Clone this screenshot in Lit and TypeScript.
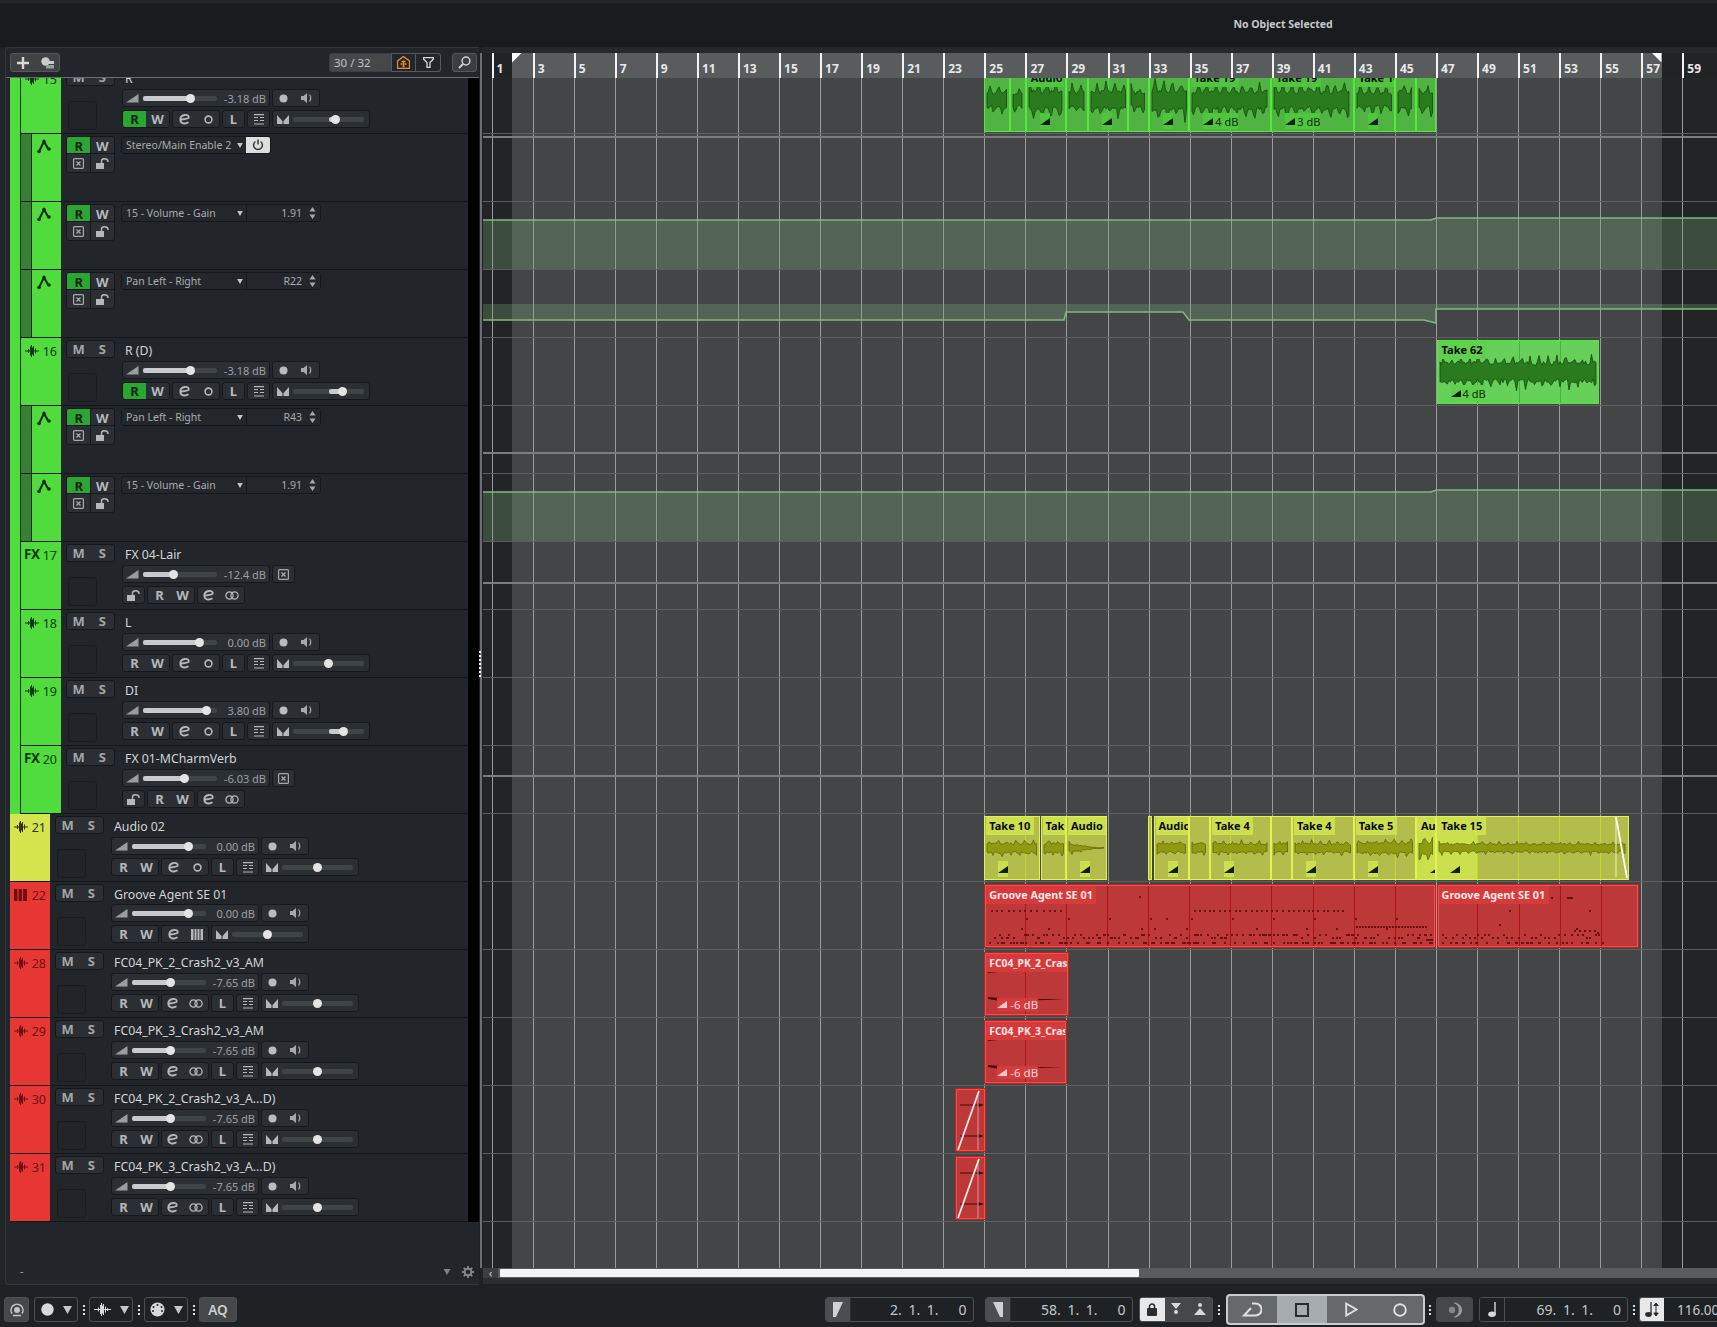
import { LitElement, html, svg, css, nothing } from "lit";
import { customElement } from "lit/decorators.js";

const PX = 20.53;
const barX = (b: number) => 491.6 + PX * (b - 1);
const AX = 483;
const GRID_BARS: number[] = [];
for (let b = 1; b <= 59; b += 2) GRID_BARS.push(b);

function rng(seed: number) {
  let s = seed * 9301 + 49297;
  return () => {
    s = (s * 9301 + 49297) % 233280;
    return s / 233280;
  };
}

function wavePath(seed: number, w: number, cy: number, amp: number, taper = false, calm = false) {
  const r = rng(seed);
  const top: string[] = [];
  const bot: string[] = [];
  const ph = r() * 6;
  const envAt = (x: number) => {
    const peak = Math.pow(Math.abs(Math.sin(x * 0.36 + ph)), calm ? 16 : 8) * (calm ? 0.4 : 0.6);
    return 0.3 + r() * 0.2 + peak * (0.4 + r() * 0.6);
  };
  for (let x = 0; x <= w; x += 1.5) {
    const k = taper ? Math.max(0.1, 1 - (x / w) * 1.2) : 1;
    top.push(`${x},${(cy - amp * envAt(x) * k).toFixed(1)}`);
    bot.push(`${x},${(cy + amp * envAt(x + 5) * k).toFixed(1)}`);
  }
  return "M" + top.join("L") + "L" + bot.reverse().join("L") + "Z";
}

const ic = {
  wave: html`<svg class="ic" width="14" height="12" viewBox="0 0 14 12"><path d="M0 6h14M3.500 4v4M5.500 1.500v9M6.500 0v12M7.500 2.500v7M8.500 1v10M10.500 3.500v5" stroke="currentColor" stroke-width="1" fill="none"/></svg>`,
  keys: html`<svg class="ic" width="13" height="12" viewBox="0 0 13 12"><path d="M0 0h13v12H0z" fill="currentColor"/><path d="M4 0v12M8.500 0v12" stroke="#e73735" stroke-width="1.200"/></svg>`,
  auto: html`<svg width="15" height="15" viewBox="0 0 15 15"><path d="M2 12.500L7 2.500l4.500 8" fill="none" stroke="#102a0c" stroke-width="2"/><circle cx="2" cy="12.500" r="1.800" fill="#102a0c"/><circle cx="7" cy="2.500" r="1.800" fill="#102a0c"/><circle cx="12" cy="10" r="1.800" fill="#102a0c"/></svg>`,
  ramp: html`<svg width="13" height="10" viewBox="0 0 13 10"><path d="M0 9.500L12.500 1v8.500z" fill="#9a9da0"/></svg>`,
  dot: html`<svg width="9" height="9" viewBox="0 0 9 9"><circle cx="4.500" cy="4.500" r="4" fill="#b9bcbe"/></svg>`,
  speaker: html`<svg width="12" height="10" viewBox="0 0 12 10"><path d="M0 3h2.500L6 0v10L2.500 7H0z" fill="#a6a9ab"/><path d="M8.500 1.500Q11 5 8.500 8.500" stroke="#a6a9ab" stroke-width="1.200" fill="none"/></svg>`,
  e: html`<svg width="12" height="11" viewBox="0 0 12 11"><path d="M2 5.500C4 5.500 7 5 9.500 4C10.500 1.500 8 .8 6 1C3 1.300 1.200 3.500 1.300 6C1.500 9.500 6 10.500 9.500 8.300" fill="none" stroke="#b5b8ba" stroke-width="1.800"/></svg>`,
  o: html`<svg width="9" height="9" viewBox="0 0 9 9"><circle cx="4.500" cy="4.500" r="3.400" fill="none" stroke="#b5b8ba" stroke-width="1.600"/></svg>`,
  link: html`<svg width="14" height="9" viewBox="0 0 14 9"><circle cx="4.500" cy="4.500" r="3.600" fill="none" stroke="#b5b8ba" stroke-width="1.300"/><circle cx="9.500" cy="4.500" r="3.600" fill="none" stroke="#b5b8ba" stroke-width="1.300"/></svg>`,
  lanes: html`<svg width="12" height="11" viewBox="0 0 12 11"><path d="M1 .600h10M1 3.500h4M7 3.500h4M1 6.500h4M7 6.500h4M1 10h10" stroke="#b5b8ba" stroke-width="1.200"/></svg>`,
  midi: html`<svg width="12" height="11" viewBox="0 0 12 11"><path d="M0 0h12v11H0z" fill="#b5b8ba"/><path d="M3 0v11M6 0v11M9 0v11" stroke="#2a2e32" stroke-width="1"/></svg>`,
  pan: html`<svg width="12" height="10" viewBox="0 0 12 10"><path d="M0 1l5.500 6v3H0zM12 1L6.500 7v3H12z" fill="#b5b8ba"/></svg>`,
  xbox: html`<svg width="11" height="11" viewBox="0 0 11 11"><rect x=".6" y=".6" width="9.800" height="9.800" rx="1" fill="none" stroke="#a6a9ab" stroke-width="1.200"/><path d="M3.500 3.500l4 4M7.500 3.500l-4 4" stroke="#a6a9ab" stroke-width="1.300"/></svg>`,
  lock: html`<svg width="13" height="11" viewBox="0 0 13 11"><rect x="0" y="5" width="8" height="6" fill="#b5b8ba"/><path d="M5.500 5V3Q5.500 .8 8.500 .8T12 3v1" fill="none" stroke="#b5b8ba" stroke-width="1.400"/></svg>`,
  power: html`<svg width="12" height="12" viewBox="0 0 12 12"><path d="M3.500 2.500a4.400 4.400 0 1 0 5 0M6 .5v5" fill="none" stroke="#33373a" stroke-width="1.500"/></svg>`,
  updown: html`<svg width="7" height="12" viewBox="0 0 7 12"><path d="M3.500 0l3 4.500H.5zM3.500 12l3-4.500H.5z" fill="#a6a9ab"/></svg>`,
  plus: html`<svg width="12" height="12" viewBox="0 0 12 12"><path d="M6 0v12M0 6h12" stroke="#d8d8d8" stroke-width="2.400"/></svg>`,
  stack: html`<svg width="13" height="12" viewBox="0 0 13 12"><circle cx="4.500" cy="4.500" r="4.200" fill="#c9cccd"/><rect x="4" y="4" width="9" height="3" fill="#c9cccd"/><rect x="5" y="8" width="8" height="3.500" fill="#9b9ea0"/></svg>`,
  home: html`<svg width="13" height="13" viewBox="0 0 13 13"><path d="M6.500 .5L12.500 5v7.500H.5V5z" fill="none" stroke="#e89030" stroke-width="1.300"/><path d="M4.500 5.500h1.500M7 5.500h1.500M3.500 8h2M7.500 8h2M5.500 10.500h2M6.500 4.500v6" stroke="#e89030" stroke-width="1.300"/></svg>`,
  funnel: html`<svg width="11" height="11" viewBox="0 0 11 11"><path d="M.5 .7h10v1.300L7 5.500V10.500H4V5.500L.5 2z" fill="none" stroke="#d8d8d8" stroke-width="1.300"/></svg>`,
  search: html`<svg width="13" height="13" viewBox="0 0 13 13"><circle cx="8" cy="5" r="3.900" fill="none" stroke="#d0d0d0" stroke-width="1.500"/><path d="M5 8l-4 4" stroke="#d0d0d0" stroke-width="2"/></svg>`,
  gear: html`<svg width="12" height="12" viewBox="0 0 12 12"><circle cx="6" cy="6" r="3.300" fill="none" stroke="#85888a" stroke-width="2"/><path d="M6 0v2.500M6 9.500V12M0 6h2.500M9.500 6H12M1.800 1.800l1.800 1.800M8.400 8.400l1.800 1.800M1.800 10.200l1.800-1.800M8.400 3.600l1.800-1.800" stroke="#85888a" stroke-width="1.800"/></svg>`,
  clockish: html`<svg width="14" height="14" viewBox="0 0 14 14"><circle cx="7" cy="7" r="3" fill="#c2c5c7"/><path d="M2 10.500A6 6 0 1 1 12 10.500M3 12.500h8" fill="none" stroke="#c2c5c7" stroke-width="1.500"/></svg>`,
  disc: html`<svg width="13" height="13" viewBox="0 0 13 13"><circle cx="6.500" cy="6.500" r="6.200" fill="#d8d8d8"/></svg>`,
  tri: html`<svg width="9" height="8" viewBox="0 0 9 8"><path d="M0 0h9L4.500 8z" fill="#c4c7c9"/></svg>`,
  bigwave: html`<svg width="17" height="13" viewBox="0 0 17 13"><path d="M0 6.500h17M4.500 4.500v4M6.500 2v9M7.500 0v13M8.500 2.500v8M9.500 1v11M11.500 3.500v6M13.500 5v3" stroke="#d8d8d8" stroke-width="1" fill="none"/></svg>`,
  midiport: html`<svg width="15" height="15" viewBox="0 0 15 15"><circle cx="7.500" cy="7.500" r="7" fill="#d8d8d8"/><g fill="#1e2225"><circle cx="7.500" cy="3" r="1"/><circle cx="3.500" cy="5" r="1"/><circle cx="11.500" cy="5" r="1"/><circle cx="3" cy="9" r="1"/><circle cx="12" cy="9" r="1"/></g></svg>`,
  locL: html`<svg width="10" height="15" viewBox="0 0 10 15"><path d="M0 0h10L3 15H0z" fill="#cfd1d2"/></svg>`,
  locR: html`<svg width="10" height="15" viewBox="0 0 10 15"><path d="M0 0h10v15H7z" fill="#cfd1d2"/></svg>`,
  padlock: html`<svg width="10" height="13" viewBox="0 0 10 13"><rect y="5" width="10" height="8" rx="1" fill="#2a2d30"/><path d="M2.500 6V3.500a2.500 2.500 0 0 1 5 0V6" fill="none" stroke="#2a2d30" stroke-width="1.500"/></svg>`,
  punchIn: html`<svg width="10" height="13" viewBox="0 0 10 13"><path d="M0 0h10L5 6zM5 7a2 2 0 1 1 0 4 2 2 0 0 1 0-4z" fill="#d8d8d8"/></svg>`,
  punchOut: html`<svg width="12" height="13" viewBox="0 0 12 13"><path d="M6 0a2 2 0 1 1 0 4 2 2 0 0 1 0-4zM6 5l6 7H0z" fill="#d8d8d8"/></svg>`,
  cycle: html`<svg width="20" height="15" viewBox="0 0 20 15"><path d="M10 1.500h3.500a6 6 0 0 1 0 12H2L9 6" fill="none" stroke="#e0e0e0" stroke-width="2"/></svg>`,
  stop: html`<svg width="14" height="14" viewBox="0 0 14 14"><rect x="1" y="1" width="12" height="12" fill="#a5abaf" stroke="#2a2d30" stroke-width="2"/></svg>`,
  play: html`<svg width="13" height="15" viewBox="0 0 13 15"><path d="M1.200 1.500L11.500 7.500 1.200 13.500z" fill="none" stroke="#e0e0e0" stroke-width="1.900"/></svg>`,
  rec: html`<svg width="14" height="14" viewBox="0 0 14 14"><circle cx="7" cy="7" r="5.800" fill="none" stroke="#e0e0e0" stroke-width="1.900"/></svg>`,
  moon: html`<svg width="18" height="16" viewBox="0 0 18 16"><circle cx="7" cy="8" r="3.200" fill="#83878a"/><path d="M9.500 1a7 7 0 0 1 0 14 7.500 7.500 0 0 0 0-14z" fill="#9a9da0" stroke="#9a9da0"/></svg>`,
  note: html`<svg width="9" height="15" viewBox="0 0 9 15"><ellipse cx="4" cy="12.300" rx="3.800" ry="2.700" fill="#d8d8d8"/><path d="M7 12V0" stroke="#d8d8d8" stroke-width="1.400"/></svg>`,
  tempo: html`<svg width="14" height="15" viewBox="0 0 14 15"><ellipse cx="3.500" cy="12.500" rx="3.300" ry="2.400" fill="#2a2d30"/><path d="M6 12V0" stroke="#2a2d30" stroke-width="1.300"/><path d="M11 1v13M8.800 3.500L11 1l2.200 2.500zM8.800 11L11 14l2.200-3z" stroke="#2a2d30" fill="#2a2d30"/></svg>`,
};

type TrackT = {
  k: "a" | "fx" | "inst" | "auto";
  color?: "g" | "y" | "r";
  n?: string;
  name?: string;
  db?: string;
  f?: number;
  p?: number;
  rOn?: boolean;
  val?: string;
};

const A = (name: string, val: string): TrackT => ({ k: "auto", color: "g", name, val });
const TRACKS: TrackT[] = [
  { k: "a", color: "g", n: "15", name: "R", db: "-3.18 dB", f: 47, p: 42, rOn: true },
  A("Stereo/Main Enable 2", ""),
  A("15 - Volume - Gain", "1.91"),
  A("Pan Left - Right", "R22"),
  { k: "a", color: "g", n: "16", name: "R (D)", db: "-3.18 dB", f: 47, p: 49, rOn: true },
  A("Pan Left - Right", "R43"),
  A("15 - Volume - Gain", "1.91"),
  { k: "fx", color: "g", n: "17", name: "FX 04-Lair", db: "-12.4 dB", f: 30 },
  { k: "a", color: "g", n: "18", name: "L", db: "0.00 dB", f: 56, p: 35.5 },
  { k: "a", color: "g", n: "19", name: "DI", db: "3.80 dB", f: 63, p: 50 },
  { k: "fx", color: "g", n: "20", name: "FX 01-MCharmVerb", db: "-6.03 dB", f: 41.5 },
  { k: "a", color: "y", n: "21", name: "Audio 02", db: "0.00 dB", f: 56, p: 35.5 },
  { k: "inst", color: "r", n: "22", name: "Groove Agent SE 01", db: "0.00 dB", f: 56, p: 35.5 },
  { k: "a", color: "r", n: "28", name: "FC04_PK_2_Crash2_v3_AM", db: "-7.65 dB", f: 38, p: 35.5 },
  { k: "a", color: "r", n: "29", name: "FC04_PK_3_Crash2_v3_AM", db: "-7.65 dB", f: 38, p: 35.5 },
  { k: "a", color: "r", n: "30", name: "FC04_PK_2_Crash2_v3_A...D)", db: "-7.65 dB", f: 38, p: 35.5 },
  { k: "a", color: "r", n: "31", name: "FC04_PK_3_Crash2_v3_A...D)", db: "-7.65 dB", f: 38, p: 35.5 },
];

type ClipT = {
  a: number;
  b: number;
  c: "g" | "gs" | "y" | "r";
  label?: string;
  labelW?: number;
  wave?: number;
  taper?: boolean;
  calm?: boolean;
  fade?: string | boolean;
  bright?: number;
  kind?: "notes" | "crash" | "tiny";
  notes?: number;
  seed?: number;
  fadeOut?: boolean;
};

const GC: Record<string, string> = { g: "#5bd14c", gs: "#43b538", y: "#c4d72f", r: "#ad1616" };

const GREEN_CLIPS: ClipT[] = [
  [984.3, 1010, "", 17, false],
  [1010, 1025.7, "", 15, false],
  [1025.7, 1066, "Audio", 21, true],
  [1066, 1087.7, "", 18, false],
  [1087.7, 1128.3, "", 19, true],
  [1128.3, 1148.7, "", 17, false],
  [1148.7, 1189.3, "", 22, true],
  [1189.3, 1271.3, "Take 19", 20, "4 dB"],
  [1271.3, 1353.7, "Take 19", 20, "3 dB"],
  [1353.7, 1395.3, "Take 16", 16, true],
  [1395.3, 1415.7, "", 20, false],
  [1415.7, 1436.3, "", 17, false],
].map((r: any, i) => ({ a: r[0], b: r[1], c: "g" as const, label: r[2], wave: r[3], fade: r[4], seed: 10 + i, labelW: r[2] === "Audio" ? 36 : 48 }));

const YELLOW_CLIPS: ClipT[] = [
  { a: 984.3, b: 1040.5, c: "y", label: "Take 10", wave: 11, fade: true, seed: 31, labelW: 48, calm: true },
  { a: 1040.5, b: 1066, c: "y", label: "Take", wave: 11, seed: 32, labelW: 25, calm: true },
  { a: 1066, b: 1107.3, c: "y", label: "Audio 0", wave: 9, taper: true, fade: true, seed: 33, labelW: 39, calm: true },
  { a: 1148.4, b: 1152, c: "y", seed: 34 },
  { a: 1153.5, b: 1189.3, c: "y", label: "Audio", wave: 10, fade: true, seed: 35, labelW: 34, calm: true },
  { a: 1189.3, b: 1210.2, c: "y", wave: 10, seed: 36, calm: true },
  { a: 1210.2, b: 1271.3, c: "y", label: "Take 4", wave: 10, fade: true, seed: 37, labelW: 41, calm: true },
  { a: 1271.3, b: 1292, c: "y", wave: 10, seed: 38, calm: true },
  { a: 1292, b: 1353.7, c: "y", label: "Take 4", wave: 10, fade: true, seed: 39, labelW: 41, calm: true },
  { a: 1353.7, b: 1416, c: "y", label: "Take 5", wave: 12, fade: true, seed: 40, labelW: 41, calm: true },
  { a: 1416, b: 1436.3, c: "y", label: "Au", wave: 14, fade: true, seed: 41, labelW: 19, bright: 21 },
  { a: 1436.3, b: 1629.3, c: "y", label: "Take 15", wave: 9, fade: true, seed: 42, labelW: 48, bright: 41, fadeOut: true, calm: true },
];

const LANES: { clips?: ClipT[]; line?: number; auto?: string }[] = [
  { clips: GREEN_CLIPS },
  { line: 2 },
  { auto: "vol1" },
  { auto: "pan1" },
  { clips: [{ a: 1436.6, b: 1599.3, c: "gs", label: "Take 62", labelW: 48, wave: 22, calm: true, fade: "4 dB", seed: 77 }] },
  { line: 46 },
  { auto: "vol2" },
  { line: 40 },
  {},
  {},
  { line: 29 },
  { clips: YELLOW_CLIPS },
  {
    clips: [
      { a: 984.3, b: 1436.3, c: "r", label: "Groove Agent SE 01", labelW: 110, kind: "notes", notes: 1 },
      { a: 1436.6, b: 1639.3, c: "r", label: "Groove Agent SE 01", labelW: 110, kind: "notes", notes: 2 },
    ],
  },
  { clips: [{ a: 984.3, b: 1069.5, c: "r", label: "FC04_PK_2_Crash2", labelW: 85, kind: "crash", fade: "-6 dB" }] },
  { clips: [{ a: 984.3, b: 1066.7, c: "r", label: "FC04_PK_3_Crash2", labelW: 79, kind: "crash", fade: "-6 dB" }] },
  { clips: [{ a: 955.3, b: 985.7, c: "r", kind: "tiny" }] },
  { clips: [{ a: 955.3, b: 985.7, c: "r", kind: "tiny" }] },
];

function notePattern(which: number, w: number) {
  const r = rng(which * 7 + 3);
  const items: [number, number, number][] = [];
  if (which === 1) {
    for (let x = 3; x < w - 2; x += 2 + r() * 5) if (r() > 0.1) items.push([Math.round(x), 48 + (r() > 0.5 ? 0 : 3), r() > 0.7 ? 3 : 2]);
    for (let x = 3; x < w - 2; x += 2 + r() * 9) items.push([Math.round(x), 56, r() > 0.6 ? 4 : 2]);
    for (let x = 5; x < 75; x += 4 + r() * 3) items.push([Math.round(x), 24, 2]);
    for (let x = 208; x < 360; x += 4 + r() * 2) items.push([Math.round(x), 24, 2]);
    for (let x = 370; x < 440; x += 3) items.push([x, 40, 2]);
    [40, 82, 123, 164, 180, 205, 246, 287, 328, 369, 410].forEach((x) => items.push([x, 32, 2]));
    [35, 62, 155, 168, 200, 270, 320, 350, 400].forEach((x) => items.push([x, 42, 2]));
    items.push([153, 10, 2], [440, 53, 7]);
  } else {
    for (let x = 3; x < 160; x += 2.5 + r() * 5) items.push([Math.round(x), 48 + (r() > 0.5 ? 0 : 3), 2]);
    for (let x = 3; x < 165; x += 4 + r() * 8) items.push([Math.round(x), 56, r() > 0.6 ? 3 : 2]);
    items.push([130, 11, 2], [128, 11, 6], [112, 11, 2], [70, 24, 2], [150, 24, 2], [60, 38, 2], [137, 42, 2], [158, 46, 2]);
    for (let x = 135; x < 160; x += 5) items.push([x, 44, 2]);
  }
  return items;
}

@customElement("app-root")
export class AppRoot extends LitElement {
  static styles = css`
    :host { display: block; width: 1717px; height: 1327px; overflow: hidden; background: #1e2225; font-family: "Noto Sans", "Open Sans", sans-serif; color: #c5c8ca; }
    svg { display: block; }
    .root { display: grid; grid-template-rows: 47px 1238px 42px; height: 1327px; }
    .top { background: #191b1e; border-top: 3px solid #24272a; box-sizing: border-box; display: flex; align-items: center; justify-content: center; padding-left: 849px; padding-bottom: 2px; font-weight: 700; font-size: 10.5px; color: #c6c8ca; }
    .main { display: flex; background: #212528; }
    .panel { box-sizing: border-box; width: 474px; margin-left: 5px; border: 1px solid #33373a; border-right: 0; border-radius: 4px 0 0 4px; background: #22262a; display: flex; flex-direction: column; flex-shrink: 0; }
    .tb { height: 30px; box-sizing: border-box; border-bottom: 1px solid #6b6e70; display: flex; align-items: flex-start; padding: 5px 0 0 4px; flex-shrink: 0; }
    .tb-g { height: 19px; box-sizing: border-box; border: 1px solid #55595c; border-radius: 3px; display: flex; align-items: center; background: #3f4346; }
    .tb-add { width: 50px; padding-left: 6px; gap: 12px; }
    .count { width: 62px; margin-left: 269px; background: #44484b; border: 1px solid #3a3e41; border-right: 0; border-radius: 3px 0 0 3px; font-size: 11.5px; padding-left: 4px; color: #c0c3c5; }
    .tb-i { width: 25px; justify-content: center; background: #22262a; border-radius: 0; }
    .tb-i.end { border-radius: 0 3px 3px 0; border-left: 0; }
    .tb-s { width: 25px; margin-left: 11px; justify-content: center; background: #3a3e41; }
    .list { flex: 1; overflow: hidden; min-height: 0; }
    .list-in { margin-top: -12px; padding-left: 4px; }
    .row { height: 68px; box-sizing: border-box; border-bottom: 1px solid #14171a; display: flex; align-items: flex-start; }
    .meter { margin-left: auto; width: 11px; height: 68px; background: #000; flex-shrink: 0; }
    .outer { width: 10px; height: 68px; background: #50dc3c; border-right: 1px solid #14301a; flex-shrink: 0; }
    .col { width: 40px; height: 67px; flex-shrink: 0; color: #0f3a0b; }
    .col.g { background: #50dc3c; }
    .col.y { background: #d5e54d; color: #2e3310; }
    .col.r { background: #e73735; color: #6e0f0f; }
    .head { display: flex; justify-content: space-between; align-items: center; padding: 4px 4px 0 4px; height: 18px; font-size: 12.5px; }
    .head .fx { font-weight: 700; font-size: 13.5px; letter-spacing: -0.5px; margin: -2px 0 0 -1px; }
    .autostrip { display: flex; flex-shrink: 0; height: 67px; }
    .dk { width: 10px; background: #3a7f36; border-right: 1px solid #14301a; }
    .br { width: 29px; background: #50dc3c; padding: 5px 0 0 5px; box-sizing: border-box; }
    .mcol { width: 49px; margin-left: 5px; flex-shrink: 0; padding-top: 2px; }
    .ms { height: 18px; box-sizing: border-box; display: flex; align-items: center; background: #2b2f33; border: 1px solid #15181b; border-radius: 3px; font-weight: 700; font-size: 13px; color: #a3a6a8; }
    .ms span { flex: 1; text-align: center; }
    .thumb { width: 29px; height: 29px; margin: 15px 0 0 2px; box-sizing: border-box; background: #212428; border: 1px solid #1a1d20; border-radius: 3px; }
    .ccol { margin-left: 7px; width: 300px; }
    .name { height: 19px; padding: 4px 0 0 3px; font-size: 12.3px; line-height: 18px; color: #d2d4d6; white-space: nowrap; }
    .inst .name { height: 18px; }
    .line { display: flex; gap: 2px; height: 18px; margin-bottom: 3px; }
    .grp { height: 18px; box-sizing: border-box; background: #2b2f33; border: 1px solid #15181b; border-radius: 3px; display: flex; align-items: center; justify-content: center; flex-shrink: 0; font-weight: 700; font-size: 13px; color: #b5b8ba; }
    .w48 { width: 48px; justify-content: space-around; }
    .w23 { width: 23px; }
    .rw { overflow: hidden; justify-content: flex-start; }
    .rw span { width: 50%; height: 100%; display: flex; align-items: center; justify-content: center; }
    .rw .on { background: #2aa732; color: #0d2410; }
    .fader { width: 148px; justify-content: flex-start; padding-left: 3px; font-weight: 400; font-size: 11px; color: #9b9fa2; }
    .track { position: relative; height: 5px; background: #3f4447; border-radius: 2px; flex-shrink: 0; }
    .track.f { width: 74px; margin-left: 4px; }
    .track.p { width: 71px; margin-left: 4px; }
    .fill { position: absolute; top: 0; height: 5px; background: #c8cbcd; border-radius: 2px; }
    .knob { position: absolute; top: -2px; width: 9px; height: 9px; border-radius: 50%; background: #e4e4e4; margin-left: -4.500px; }
    .db { margin-left: auto; padding-right: 3px; white-space: nowrap; }
    .pan { width: 98px; justify-content: flex-start; padding-left: 4px; }
    .auto-g { width: 49px; height: 37px; margin: 2px 0 0 5px; display: grid; grid-template-columns: 1fr 1fr; grid-template-rows: 17px 1fr; box-sizing: border-box; background: #2b2f33; border: 1px solid #15181b; border-radius: 3px; overflow: hidden; flex-shrink: 0; font-weight: 700; font-size: 13px; color: #b5b8ba; }
    .auto-g > div { display: flex; align-items: center; justify-content: center; border-left: 1px solid #15181b; border-top: 1px solid #15181b; margin: -1px 0 0 -1px; }
    .auto-g .on { background: #2aa732; color: #0d2410; }
    .dd { margin: 2px 0 0 6px; height: 18px; box-sizing: border-box; display: flex; font-size: 10.5px; color: #a8abad; background: #23272b; border: 1px solid #15181b; border-radius: 3px; overflow: hidden; flex-shrink: 0; }
    .dd-l { width: 124px; box-sizing: border-box; padding-left: 4px; display: flex; align-items: center; white-space: nowrap; }
    .dd-tri { margin-left: auto; margin-right: 3px; }
    .dd-tri svg { width: 6px; height: 5px; }
    .dd-v { width: 74px; box-sizing: border-box; display: flex; align-items: center; justify-content: flex-end; gap: 7px; padding-right: 4px; border-left: 1px solid #15181b; }
    .dd-p { width: 24px; background: #dedfe0; display: flex; align-items: center; justify-content: center; }
    .foot { height: 56px; flex-shrink: 0; display: flex; align-items: flex-end; padding: 0 5px 6px 14px; gap: 10px; font-size: 11px; color: #a6a9ab; }
    .foot .f-tri { margin-left: auto; margin-bottom: 3px; }
    .foot .f-tri svg { width: 10px; height: 6px; }
    .foot .f-tri svg path { fill: #7f8285; }
    .split { width: 4px; flex-shrink: 0; background: #1f2225; position: relative; }
    .split::before { content: ""; position: absolute; left: 1px; top: 6px; bottom: 17px; width: 2px; background: #6c6f71; }
    .grip { position: absolute; left: 0; top: 604px; width: 2px; height: 26px; background: repeating-linear-gradient(#fff 0 2px, transparent 2px 4px); }
    .arr { flex: 1; min-width: 0; padding-top: 6px; display: flex; flex-direction: column; background: #25282b; }
    .ruler { height: 25px; position: relative; background: #212325; flex-shrink: 0; overflow: hidden; }
    .ruler-in { position: absolute; top: 0; bottom: 0; background: #585c5d; }
    .tick { position: absolute; top: 0; bottom: 0; width: 1.500px; background: #f2f2f2; }
    .rn { position: absolute; top: 8px; font-size: 12px; font-weight: 700; line-height: 16px; color: #e8e8e8; }
    .ruler svg { position: absolute; top: 0; }
    .canvas { height: 1190px; position: relative; overflow: hidden; background: #232426; flex-shrink: 0; }
    .inner { position: absolute; top: 0; bottom: 0; background: #444547; }
    .gridsvg { position: absolute; left: 0; top: 0; }
    .lanes { position: absolute; left: 0; right: 0; top: -12px; }
    .lane { height: 68px; box-sizing: border-box; border-bottom: 1px solid #5d5e60; position: relative; }
    .lane .hl { position: absolute; left: 0; right: 0; height: 2px; background: #7a7e80; }
    .autosvg { position: absolute; left: 0; top: 0; }
    .clip { position: absolute; top: 2px; height: 64px; box-sizing: border-box; border: 1px solid; overflow: hidden; }
    .clip svg { position: absolute; left: 0; top: 0; }
    .clip.g { background: #50b443; border-color: #58e640; }
    .clip.gs { background: #66d05a; border-color: #4cec36; }
    .clip.y { background: #b3bd4c; border-color: #e2f250; }
    .clip.r { background: #bd3839; border-color: #f2504f; outline: 1px solid #c31f1f; outline-offset: -1px; border-width: 2px; }
    .bright { position: absolute; left: 0; top: 0; bottom: 0; background: #cbe04d; }
    .lbl { position: absolute; left: 1px; top: 0; height: 18px; padding-left: 3px; box-sizing: border-box; font-weight: 700; font-size: 11px; line-height: 18px; color: #0a0a0a; white-space: nowrap; overflow: hidden; }
    .g .lbl { background: #50c63e; }
    .gs .lbl { background: #5ed04c; }
    .y .lbl { background: #cce04f; }
    .r .lbl { background: #d73a3b; color: #ffe9e9; left: 0; font-size: 10.8px; }
    .r.crash .lbl { font-size: 10.3px; }
    .fd { position: absolute; left: 13px; top: 44px; height: 16px; display: flex; align-items: center; font-size: 11px; color: #0d2a09; gap: 2px; white-space: nowrap; }
    .g .fd { background: #50c63e; }
    .gs .fd { background: #5ed04c; }
    .y .fd { background: #cce04f; }
    .r .fd { background: #d73a3b; color: #f8dada; height: 13px; top: 44px; left: 11px; gap: 3px; font-size: 11.5px; }
    .fd svg { position: static; }
    .sb { height: 10px; background: #585c5d; position: relative; flex-shrink: 0; }
    .sb-btn { position: absolute; left: 0; top: 0; width: 15px; height: 10px; background: #3a3e41; font-size: 10px; line-height: 10px; text-align: center; color: #e0e0e0; }
    .sb-th { position: absolute; left: 17px; top: 1px; width: 639px; height: 8px; background: #f3f3f3; border-radius: 1px; }
    .sb-pad { flex: 1; background: #2a2e31; border-bottom: 1px solid #1c1f22; }
    .bar { display: flex; align-items: center; padding: 7px 0 0 4px; background: #1e2225; overflow: hidden; }
    .bar > * { flex-shrink: 0; }
    .bx { height: 25px; box-sizing: border-box; border: 1px solid #4b4f52; border-radius: 3px; display: flex; align-items: center; justify-content: center; gap: 4px; background: #1e2225; }
    .b-clock { width: 25px; background: #44484b; }
    .w44 { width: 44px; gap: 9px; }
    .dots { width: 11px; display: flex; flex-direction: column; align-items: center; gap: 2px; }
    .dots i { width: 2px; height: 2px; background: #e0e0e0; }
    .aq { width: 38px; background: #44484b; font-weight: 600; font-size: 13.5px; color: #cfd1d2; }
    .sp { width: 587.500px; }
    .loc { justify-content: flex-start; width: 149px; gap: 0; overflow: hidden; }
    .loc-i { width: 24px; height: 100%; background: #4a4e52; display: flex; align-items: center; justify-content: center; border-right: 1px solid #2a2e31; flex-shrink: 0; }
    .loc-i.n { background: #1e2225; border-right: 1px solid #4b4f52; }
    .loc-t { margin-left: auto; padding-right: 6px; font-size: 14px; color: #c4c7c9; white-space: pre; word-spacing: 3px; }
    .lockg { width: 74px; justify-content: space-between; padding: 0; overflow: hidden; margin-left: 6px; background: #44484b; gap: 0; }
    .lockg span { flex: 1; height: 100%; display: flex; align-items: center; justify-content: center; }
    .lockg .wh { background: #e8e8e8; flex: none; width: 25px; }
    .transport { width: 199px; height: 31px; box-sizing: border-box; border: 2px solid #c8cccf; border-radius: 4px; background: #66696b; display: grid; grid-template-columns: 49px 50px 50px 1fr; margin-top: 0; }
    .transport > div { display: flex; align-items: center; justify-content: center; }
    .transport .st { background: #a5abaf; }
    .metro { width: 37px; background: #44484b; border-color: #44484b; }
    .tempo { width: 90px; justify-content: flex-start; gap: 0; border-right: 0; border-radius: 3px 0 0 3px; overflow: hidden; }
    .tempo .wh { width: 24px; height: 100%; background: #e8e8e8; display: flex; align-items: center; justify-content: center; flex-shrink: 0; }
    .tempo .t { padding-left: 13px; font-size: 13.5px; color: #c4c7c9; }
    .ml6 { margin-left: 6.500px; }
    .ml11 { margin-left: 11px; }
  `;

  slider(f: number) {
    return html`<div class="track f"><div class="fill" style="left:0;width:${f}px"></div><div class="knob" style="left:${f}px"></div></div>`;
  }
  panSlider(p: number) {
    const c = 35.5;
    const l = Math.min(c, p);
    return html`<div class="track p"><div class="fill" style="left:${l}px;width:${Math.abs(p - c)}px"></div><div class="knob" style="left:${p}px"></div></div>`;
  }

  renderTrack(t: TrackT) {
    if (t.k === "auto") {
      const power = t.val === "";
      return html`<div class="row">
        <div class="outer"></div>
        <div class="autostrip"><div class="dk"></div><div class="br">${ic.auto}</div></div>
        <div class="auto-g"><div class="on">R</div><div>W</div><div>${ic.xbox}</div><div>${ic.lock}</div></div>
        <div class="dd">
          <div class="dd-l">${t.name}<span class="dd-tri">${ic.tri}</span></div>
          ${power ? html`<div class="dd-p">${ic.power}</div>` : html`<div class="dd-v">${t.val}${ic.updown}</div>`}
        </div>
        <div class="meter"></div>
      </div>`;
    }
    const green = t.color === "g";
    const fx = t.k === "fx";
    const inst = t.k === "inst";
    return html`<div class="row ${t.k}">
      ${green ? html`<div class="outer"></div>` : nothing}
      <div class="col ${t.color}">
        <div class="head">${fx ? html`<span class="fx">FX</span>` : inst ? ic.keys : ic.wave}<span>${t.n}</span></div>
      </div>
      <div class="mcol"><div class="ms"><span>M</span><span>S</span></div><div class="thumb"></div></div>
      <div class="ccol">
        <div class="name">${t.name}</div>
        <div class="line">
          <div class="grp fader">${ic.ramp}${this.slider(t.f!)}<span class="db">${t.db}</span></div>
          ${fx ? html`<div class="grp w23">${ic.xbox}</div>` : html`<div class="grp w48">${ic.dot}${ic.speaker}</div>`}
        </div>
        <div class="line">
          ${fx ? html`<div class="grp w23">${ic.lock}</div>` : nothing}
          <div class="grp w48 rw"><span class="${t.rOn ? "on" : ""}">R</span><span>W</span></div>
          <div class="grp w48">${ic.e}${fx ? ic.link : inst ? ic.midi : t.n && +t.n >= 28 ? ic.link : ic.o}</div>
          ${fx || inst ? nothing : html`<div class="grp w23">L</div><div class="grp w23">${ic.lanes}</div>`}
          ${fx ? nothing : html`<div class="grp pan">${ic.pan}${this.panSlider(t.p!)}</div>`}
        </div>
      </div>
      <div class="meter"></div>
    </div>`;
  }

  renderClip(c: ClipT) {
    const w = c.b - c.a;
    const left = c.a - AX;
    const inner = w - (c.c === "r" ? 4 : 2);
    const off = c.c === "r" ? 2 : 1;
    const bars = GRID_BARS.map((b) => Math.round(barX(b) - c.a - off) + 0.5).filter((x) => x > 1 && x < inner - 1);
    const fadeTri = (col: string) => html`<svg width="10" height="7" viewBox="0 0 10 7"><path d="M0 7L10 0v7z" fill="${col}"/></svg>`;
    const waveCols: Record<string, [string, string]> = { g: ["#2a7b1d", "#17470f"], gs: ["#2a7b1d", "#17470f"], y: ["#8f9a10", "#5f6612"] };
    return html`<div class="clip ${c.c} ${c.kind || ""}" style="left:${left}px;width:${w}px">
      ${c.bright ? html`<div class="bright" style="width:${c.bright}px"></div>` : nothing}
      <svg width="${inner}" height="62" viewBox="0 0 ${inner} 62">
        ${bars.map((x) => svg`<line x1="${x}" x2="${x}" y1="0" y2="62" stroke="${GC[c.c]}"/>`)}
        ${c.wave ? svg`<path d="${wavePath(c.seed || 1, inner - 4, 31, c.wave, c.taper, c.calm)}" transform="translate(2 0)" fill="${waveCols[c.c][0]}" stroke="${waveCols[c.c][1]}" stroke-width="0.8" stroke-linejoin="round"/>` : nothing}
        ${c.kind === "notes" ? notePattern(c.notes!, inner).map(([x, y, l]) => svg`<rect x="${x}" y="${y}" width="${l}" height="2" fill="#6e1010"/>`) : nothing}
        ${c.kind === "crash"
          ? svg`<path d="M2 45L14 47 L${inner - 2} 45.500 L14 44 2 43z" fill="#4a0c0c"/><path d="M2 17l10 1-10 1z" fill="#4a0c0c"/>`
          : nothing}
        ${c.kind === "tiny"
          ? svg`<path d="M3 15H${inner - 2}M3 46H${inner - 2}" stroke="#3d0b0b" stroke-width="1"/><path d="M21 13l6 2-6 2zM21 44l6 2-6 2z" fill="#3d0b0b"/>
                <line x1="21" x2="21" y1="2" y2="60" stroke="#e09a9a"/><line x1="1" y1="60" x2="22" y2="1" stroke="#f6e8e8" stroke-width="1.800"/>`
          : nothing}
        ${c.fadeOut ? svg`<line x1="${inner - 12}" x2="${inner - 12}" y1="0" y2="60" stroke="#eef2c8"/><line x1="${inner - 12}" y1="0" x2="${inner - 1}" y2="61" stroke="#fff" stroke-width="1.800"/>` : nothing}
      </svg>
      ${c.label ? html`<div class="lbl" style="width:${Math.min(c.labelW || 48, inner)}px">${c.label}</div>` : nothing}
      ${c.fade
        ? html`<div class="fd">${fadeTri(c.c === "r" ? "#f0c8c8" : "#10200c")}${typeof c.fade === "string" ? html`<span>${c.fade}</span>` : nothing}</div>`
        : nothing}
    </div>`;
  }

  renderAuto(id: string) {
    const w = 1234;
    const m = (x: number) => x - AX;
    const stroke = "#82b883";
    const fill = "rgba(115,165,115,0.32)";
    if (id === "vol1" || id === "vol2") {
      const y = 18;
      return html`<svg class="autosvg" width="${w}" height="67" viewBox="0 0 ${w} 67">
        <path d="M0 ${y}H${m(1431)}L${m(1436.5)} ${y - 2}H${w}V67H0Z" fill="${fill}"/>
        <path d="M0 ${y}H${m(1431)}L${m(1436.5)} ${y - 2}H${w}" fill="none" stroke="${stroke}" stroke-width="1.500"/>
      </svg>`;
    }
    const pts = `0 50H${m(1064)}L${m(1066)} 42H${m(1183)}L${m(1189)} 50H${m(1424)}L${m(1436)} 53V39H${w}`;
    return html`<svg class="autosvg" width="${w}" height="67" viewBox="0 0 ${w} 67">
      <path d="M0 34V50H${m(1064)}L${m(1066)} 42H${m(1183)}L${m(1189)} 50H${m(1424)}L${m(1436)} 53V39H${w}V34Z" fill="${fill}"/>
      <path d="M${pts}" fill="none" stroke="${stroke}" stroke-width="1.500"/>
    </svg>`;
  }

  render() {
    const innerL = barX(2) - AX;
    const innerW = barX(58) - barX(2);
    const gx = (b: number) => Math.round(barX(b) - AX) + 0.5;
    return html`<div class="root">
      <div class="top">No Object Selected</div>
      <div class="main">
        <div class="panel">
          <div class="tb">
            <div class="tb-g tb-add">${ic.plus}${ic.stack}</div>
            <div class="tb-g count">30 / 32</div>
            <div class="tb-g tb-i">${ic.home}</div>
            <div class="tb-g tb-i end">${ic.funnel}</div>
            <div class="tb-g tb-s">${ic.search}</div>
          </div>
          <div class="list"><div class="list-in">${TRACKS.map((t) => this.renderTrack(t))}</div></div>
          <div class="foot"><span>-</span><span class="f-tri">${ic.tri}</span>${ic.gear}</div>
        </div>
        <div class="split"><div class="grip"></div></div>
        <div class="arr">
          <div class="ruler">
            <div class="ruler-in" style="left:${innerL}px;width:${innerW}px"></div>
            ${GRID_BARS.map(
              (b) => html`<div class="tick" style="left:${gx(b) - 0.5}px"></div><div class="rn" style="left:${barX(b) - AX + 5}px">${b}</div>`
            )}
            <svg style="left:${innerL}px" width="10" height="10" viewBox="0 0 10 10"><path d="M0 0h9.500L0 9.500z" fill="#fff"/></svg>
            <svg style="left:${innerL + innerW - 9.5}px" width="10" height="10" viewBox="0 0 10 10"><path d="M0 0h9.500v9.500z" fill="#fff"/></svg>
          </div>
          <div class="canvas">
            <div class="inner" style="left:${innerL}px;width:${innerW}px"></div>
            <svg class="gridsvg" width="1234" height="1190" viewBox="0 0 1234 1190">
              ${GRID_BARS.map((b) => svg`<line x1="${gx(b)}" x2="${gx(b)}" y1="0" y2="1190" stroke="#9a9b9c" stroke-width="1"/>`)}
            </svg>
            <div class="lanes">
              ${LANES.map(
                (l) => html`<div class="lane">
                  ${l.auto ? this.renderAuto(l.auto) : nothing}
                  ${l.line ? html`<div class="hl" style="top:${l.line}px"></div>` : nothing}
                  ${l.clips ? l.clips.map((c) => this.renderClip(c)) : nothing}
                </div>`
              )}
            </div>
          </div>
          <div class="sb"><div class="sb-btn">‹</div><div class="sb-th"></div></div>
          <div class="sb-pad"></div>
        </div>
      </div>
      <div class="bar">
        <div class="bx b-clock">${ic.clockish}</div>
        <div class="bx w44" style="margin-left:5px">${ic.disc}${ic.tri}</div>
        <div class="dots"><i></i><i></i><i></i></div>
        <div class="bx w44">${ic.bigwave}${ic.tri}</div>
        <div class="dots"><i></i><i></i><i></i></div>
        <div class="bx w44">${ic.midiport}${ic.tri}</div>
        <div class="dots"><i></i><i></i><i></i></div>
        <div class="bx aq">AQ</div>
        <div class="sp"></div>
        <div class="bx loc"><div class="loc-i">${ic.locL}</div><div class="loc-t">2. 1. 1.   0</div></div>
        <div class="bx loc ml11" style="width:148px"><div class="loc-i">${ic.locR}</div><div class="loc-t">58. 1. 1.   0</div></div>
        <div class="bx lockg"><span class="wh">${ic.padlock}</span><span>${ic.punchIn}</span><span>${ic.punchOut}</span></div>
        <div class="dots" style="width:13px"><i></i><i></i><i></i></div>
        <div class="transport">
          <div>${ic.cycle}</div><div class="st">${ic.stop}</div><div>${ic.play}</div><div>${ic.rec}</div>
        </div>
        <div class="dots"><i></i><i></i><i></i></div>
        <div class="bx metro">${ic.moon}</div>
        <div class="bx loc ml6"><div class="loc-i n">${ic.note}</div><div class="loc-t">69. 1. 1.   0</div></div>
        <div class="dots"><i></i><i></i><i></i></div>
        <div class="bx tempo"><div class="wh">${ic.tempo}</div><div class="t">116.000</div></div>
      </div>
    </div>`;
  }
}
